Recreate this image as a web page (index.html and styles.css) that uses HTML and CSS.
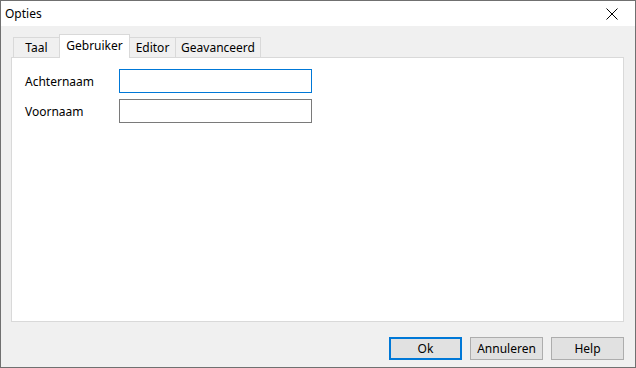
FILE: index.html
```html
<!DOCTYPE html>
<html lang="nl">
<head>
  <meta charset="UTF-8" />
  <title>Opties</title>
  <link rel="stylesheet" href="styles.css">
</head>
<body>
  <div class="dialog">
    <!-- Title bar -->
    <div class="titlebar">
      <span class="title">Opties</span>
      <svg class="close" width="12" height="12" viewBox="0 0 12 12">
        <path d="M0.5 0.5 L11.5 11.5 M11.5 0.5 L0.5 11.5" stroke="#000" stroke-width="1" fill="none" />
      </svg>
    </div>

    <div class="content">
      <!-- Tabs -->
      <div class="tabs">
        <div class="tab tab-taal">Taal</div>
        <div class="tab tab-gebruiker active">Gebruiker</div>
        <div class="tab tab-editor">Editor</div>
        <div class="tab tab-geavanceerd">Geavanceerd</div>
      </div>

      <div class="panel">
        <div class="row">
          <label class="label">Achternaam</label>
          <div class="input focused"></div>
        </div>
        <div class="row">
          <label class="label">Voornaam</label>
          <div class="input"></div>
        </div>
      </div>

      <!-- Buttons -->
      <div class="buttons">
        <button class="btn default">Ok</button>
        <button class="btn">Annuleren</button>
        <button class="btn">Help</button>
      </div>
    </div>
  </div>
</body>
</html>
```

FILE: styles.css
```css
* { box-sizing: border-box; margin: 0; padding: 0; }

body {
  width: 636px;
  height: 368px;
  font-family: 'Noto Sans', 'DejaVu Sans', sans-serif;
  font-size: 12px;
  color: #000;
  overflow: hidden;
}

.dialog {
  width: 636px;
  height: 368px;
  border: 1px solid #707070;
  background: #f0f0f0;
  display: flex;
  flex-direction: column;
}

/* Title bar */
.titlebar {
  height: 25px;
  background: #fff;
  display: flex;
  align-items: center;
  justify-content: space-between;
  padding: 0 17px 0 4px;
}
.title {
  font-size: 12px;
  line-height: 1;
}
.close { display: block; }

/* Content */
.content {
  flex: 1;
  padding: 8px 11px 7px 10px;
  display: flex;
  flex-direction: column;
}

/* Tabs */
.tabs {
  display: flex;
  align-items: flex-end;
  height: 23px;
  padding-left: 2px;
  position: relative;
  z-index: 2;
}
.tab {
  height: 20px;
  border: 1px solid #d9d9d9;
  border-bottom: none;
  background: #f0f0f0;
  text-align: center;
  line-height: 20px;
  margin-left: -1px;
}
.tab:first-child { margin-left: 0; }
.tab-taal { width: 47px; }
.tab-gebruiker { width: 71px; }
.tab-editor { width: 47px; }
.tab-geavanceerd { width: 86px; }
.tab.active {
  height: 24px;
  background: #fff;
  margin-bottom: -1px;
  line-height: 21px;
  position: relative;
  z-index: 3;
  padding-bottom: 2px;
}

.panel {
  height: 265px;
  background: #fff;
  border: 1px solid #d9d9d9;
  padding: 11px 0 0 13px;
  display: flex;
  flex-direction: column;
  gap: 6px;
}

.row {
  display: flex;
  align-items: center;
  height: 24px;
}
.label {
  width: 94px;
}
.input {
  width: 193px;
  height: 24px;
  border: 1px solid #7a7a7a;
  background: #fff;
}
.input.focused { border-color: #0078d7; }

/* Buttons */
.buttons {
  margin-top: auto;
  display: flex;
  justify-content: flex-end;
  gap: 8px;
}
.btn {
  width: 73px;
  height: 23px;
  background: #e1e1e1;
  border: 1px solid #adadad;
  font-family: inherit;
  font-size: 12px;
  color: #000;
}
.btn.default {
  border: 2px solid #0078d7;
}
```
